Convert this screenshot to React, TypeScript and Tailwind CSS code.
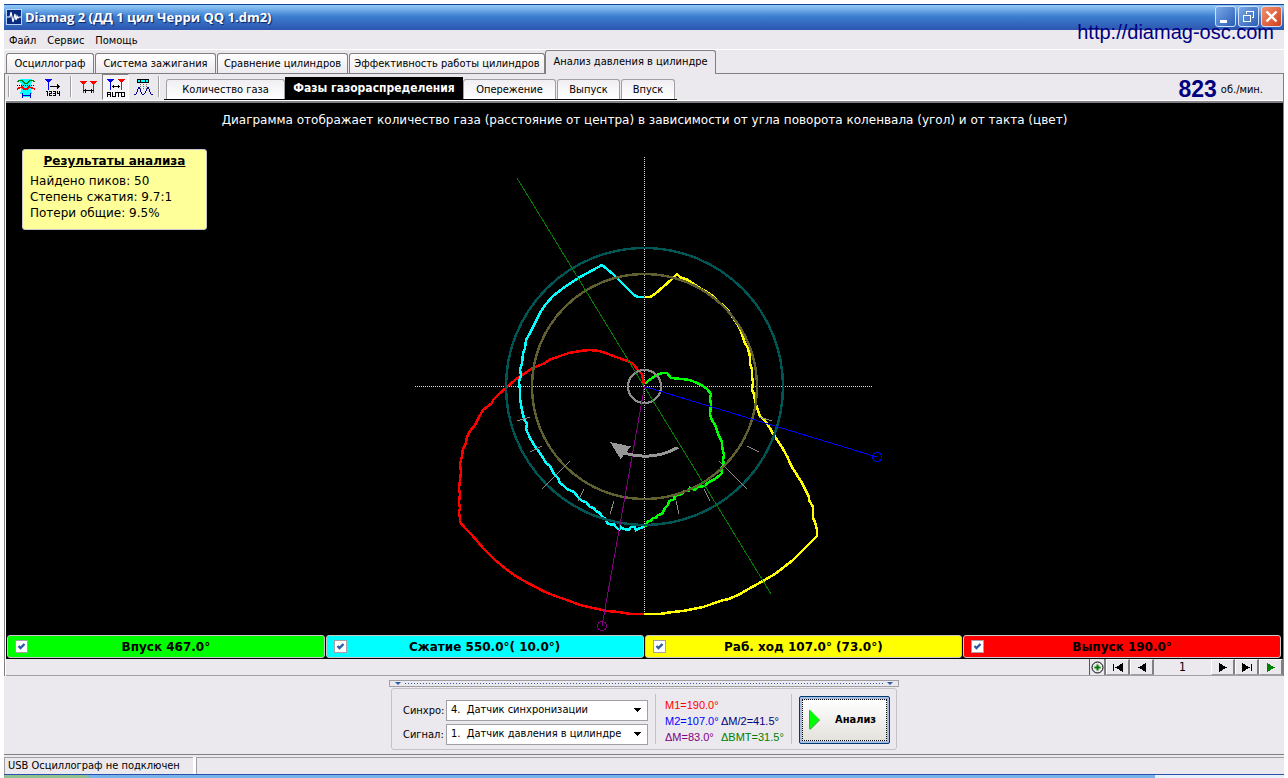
import React from "react";

const TAHOMA = "font-['DejaVu_Sans_Condensed','Liberation_Sans',sans-serif]";

const RED =
  "644,384 642,374 638,370 634,365 630,362 622,359 613,356 606,353 599,351 589,350 580,351 569,353 557,357 549,360 545,363 533,368 524,374 515,380 507,387 498,395 493,400 492,403 483,410 479,417 475,425 470,431 467,437 466,443 463,449 462,456 461,460 460,464 461,472 460,480 459,488 460,495 459,502 460,508 459,512 460,519 460,522 466,529 472,535 483,548 495,560 506,569 517,577 530,584 543,591 555,596 567,600 580,605 593,608 607,611 619,612 630,614 644,614";
const YELLOW =
  "644,614 660,614 672,612 683,611 693,609 703,607 712,604 720,601 729,599 740,594 752,587 763,581 775,574 784,567 793,560 805,548 817,536 817,530 815,522 813,518 813,507 809,500 809,497 805,489 802,483 797,475 792,467 789,461 788,458 783,449 778,441 773,434 770,428 766,422 760,416 757,408 755,401 754,394 752,390 753,383 752,376 752,369 750,364 750,357 748,348 745,343 743,338 741,331 738,325 734,319 730,313 726,308 720,303 714,297 707,292 701,289 695,285 688,280 680,277 677,274 672,279 663,287 655,294 650,297 645,297";
const CYAN =
  "644,297 638,297 634,295 630,291 622,283 613,274 602,265 593,270 580,277 566,286 553,296 546,304 540,313 536,321 532,329 530,333 526,340 525,348 523,354 522,363 520,370 521,375 519,382 520,390 520,398 522,410 524,419 527,424 526,429 530,438 533,443 537,449 542,456 546,463 550,466 554,474 558,478 560,483 564,486 567,489 574,492 578,497 582,501 586,502 590,507 594,508 596,511 600,513 602,517 606,519 607,523 612,525 614,524 616,527 619,530 621,527 624,529 629,530 631,527 634,526 636,530 640,528 644,527";
const GREEN =
  "645,527 648,521 651,521 653,518 656,518 658,515 662,514 665,508 668,505 669,501 675,499 674,496 682,494 684,491 689,491 690,488 695,490 698,487 704,486 709,482 715,479 720,475 722,473 721,468 724,465 723,460 724,455 722,446 722,442 720,438 718,434 717,430 715,425 712,420 710,414 711,405 710,398 711,394 707,389 703,386 697,383 690,380 682,379 671,378 667,373 662,373 657,375 652,378 648,381 645,384";

const TICKS = [
  [517, 421, 530, 417],
  [530, 452, 542, 446],
  [542, 489, 570, 461],
  [578, 501, 584, 489],
  [610, 514, 614, 501],
  [759, 417, 772, 421],
  [747, 446, 759, 452],
  [719, 461, 747, 489],
  [704, 489, 710, 501],
  [676, 501, 679, 514],
];

function PolarChart() {
  return (
    <svg
      width="479"
      height="484"
      viewBox="405 150 479 484"
      fill="none"
      shapeRendering="crispEdges"
      role="img"
      aria-label="Фазы газораспределения"
      className="mx-auto block"
    >
      <path d="M644.5 157V615M415 386.5H873" stroke="#d8d8d8" strokeDasharray="1 1" />
      <polyline points={RED} stroke="#ff0000" strokeWidth="2.5" />
      <polyline points={YELLOW} stroke="#ffff00" strokeWidth="2.5" />
      <polyline points={CYAN} stroke="#00ffff" strokeWidth="2.5" />
      <polyline points={GREEN} stroke="#00ff00" strokeWidth="2.5" />
      <circle cx="644.5" cy="386.5" r="138.5" stroke="#005555" strokeWidth="2.400" />
      <circle cx="644.5" cy="386.5" r="112.5" stroke="#606030" strokeWidth="2.400" />
      <circle cx="644.5" cy="386.5" r="16.5" stroke="#8c8c8c" strokeWidth="2.200" />
      {TICKS.map(([x1, y1, x2, y2]) => (
        <line key={`${x1}-${y1}`} x1={x1} y1={y1} x2={x2} y2={y2} stroke="#8a8a8a" />
      ))}
      <path d="M517 178L771 594" stroke="#008000" />
      <path d="M644.5 386.5L877 457" stroke="#0000ff" />
      <circle cx="877" cy="457" r="4.5" stroke="#0000ff" />
      <path d="M644.5 386.5L602 626" stroke="#800080" />
      <circle cx="602" cy="626" r="4.5" stroke="#800080" />
      <path d="M678 447.5A70 70 0 0 1 624 453" stroke="#989898" strokeWidth="3" />
      <path d="M610 442L631 446.5L620.5 459Z" fill="#989898" />
    </svg>
  );
}

function TabBar() {
  const tabs = [
    { label: "Осциллограф", w: "w-[88px]" },
    { label: "Система зажигания", w: "w-[121px]" },
    { label: "Сравнение цилиндров", w: "w-[131px]" },
    { label: "Эффективность работы цилиндров", w: "w-[196px]" },
  ];
  return (
    <div role="tablist" className="flex h-[24px] items-end border-b border-[#808080] pl-[2px]">
      {tabs.map((t) => (
        <button
          key={t.label}
          role="tab"
          aria-selected="false"
          className={`${t.w} mr-px h-[20px] shrink-0 whitespace-nowrap rounded-t-[3px] border border-b-0 border-[#808080] bg-linear-to-b from-white to-[#eceaee] pt-px`}
        >
          {t.label}
        </button>
      ))}
      <button
        role="tab"
        aria-selected="true"
        className="-mb-px -ml-px h-[24px] w-[171px] shrink-0 whitespace-nowrap rounded-t-[3px] border border-b-0 border-[#808080] bg-[#ebe9ed]"
      >
        Анализ давления в цилиндре
      </button>
    </div>
  );
}

function Separator() {
  return <span className="mt-[2px] h-[21px] w-[2px] border-l border-[#a0a0a0] bg-white" />;
}

function Toolbar() {
  const plain =
    "h-[20px] rounded-t-[3px] border border-b-0 border-[#a0a0a4] bg-linear-to-b from-[#f0eef2] to-white pt-px whitespace-nowrap";
  const tool = "grid h-[26px] place-items-center pt-px";
  return (
    <div className="flex h-[26px] items-start pl-[3px]">
      <Separator />
      <button aria-label="Осциллограмма" className={`${tool} ml-[3px] w-[26px]`}>
        <svg width="20" height="20" viewBox="0 0 20 20" fill="none" shapeRendering="crispEdges">
          <path d="M4 1h12v4h-1v9h1v2h-2v3H6v-3H4v-2h1V5H4z" fill="#00ffff" />
          <path d="M1 3.500h1l1-1h3l2 2 1 1h2l1-1 2-2h3l1 1h1" stroke="#008000" />
          <path d="M1 7.500H19" stroke="#000" strokeDasharray="1 1" />
          <path d="M1 11l2-1 3-1 2 2h3l2-2 3 1 3 1" stroke="#ff0000" strokeWidth="1.500" />
          <path d="M6 17.500h9M6.500 15v5M14.500 15v5" stroke="#0000c0" />
        </svg>
      </button>
      <button aria-label="Номера" className={`${tool} w-[28px]`}>
        <svg width="18" height="20" viewBox="0 0 18 20" fill="none" shapeRendering="crispEdges">
          <path d="M1 1h7v1H7v1H6v1H3V3H2V2H1z" fill="#0000ff" />
          <path d="M4.500 3v9" stroke="#0000ff" />
          <path d="M6 8.500h10M13 6v5M14 7v3M15 8h1" stroke="#000" />
          <path d="M2 13.500h1v4M5 13.500h2v2h-1.500v2H8M9 13.500h2v4H9M9 15.500h2M13.500 13v2.500H16M15.500 13v5" stroke="#000" />
        </svg>
      </button>
      <span className="ml-[3px] flex"><Separator /></span>
      <button aria-label="Маркеры" className={`${tool} ml-[2px] w-[28px]`}>
        <svg width="18" height="20" viewBox="0 0 18 20" fill="none" shapeRendering="crispEdges">
          <path d="M1 3h7v1H7v1H6v1H5v9H4V6H3V5H2V4H1z" fill="#ff0000" />
          <path d="M11 3h7v1h-1v1h-1v1h-1v9h-1V6h-1V5h-1V4h-1z" fill="#ff0000" />
          <path d="M4 12.500h11M6.500 10.500v4M12.500 10.500v4" stroke="#000" />
        </svg>
      </button>
      <button
        aria-label="Автоматические маркеры"
        aria-pressed="true"
        className="grid h-[26px] w-[27px] place-items-center border border-t-[#808080] border-l-[#808080] border-r-white border-b-white bg-[#f6f5f7]"
      >
        <svg width="20" height="21" viewBox="0 0 20 21" fill="none" shapeRendering="crispEdges">
          <path d="M1 2h7v1H7v1H6v1H5v8H4V5H3V4H2V3H1z" fill="#0000ff" />
          <path d="M12 2h7v1h-1v1h-1v1h-1v8h-1V5h-1V4h-1V3h-1z" fill="#ff0000" />
          <path d="M6 9.500h8M7.500 8v3M12.500 8v3" stroke="#000" />
          <path d="M1.500 20v-4l1-1h1l1 1v4M1 17.500h4M6.500 15v4.500h3V15M10 15.500h5M12.500 15v5M15.500 15.500h3v4h-3z" stroke="#000" />
        </svg>
      </button>
      <button aria-label="Сравнение" className={`${tool} w-[28px]`}>
        <svg width="19" height="19" viewBox="0 0 19 19" fill="none" shapeRendering="crispEdges">
          <path d="M3 1h12v4H3z" fill="#000" />
          <path d="M4 2h2v2H4zM7 2h4v2H7zM12 2h2v2h-2z" fill="#00ffff" />
          <path d="M6.500 6v6M9.500 6v6M12.500 6v6" stroke="#707070" strokeDasharray="1 1" />
          <path d="M0 17l2-1 3-7 3 7h2l1-1 3-6 3 7 2 1" stroke="#0000a0" />
        </svg>
      </button>
      <span className="ml-px flex"><Separator /></span>
      <div role="tablist" className="mt-[4px] ml-[4px] flex h-[22px] items-end border-b border-black pr-[2px] pl-[2px]">
        <button role="tab" aria-selected="false" className={`${plain} w-[119px]`}>Количество газа</button>
        <button role="tab" aria-selected="true" className="h-[22px] w-[178px] whitespace-nowrap bg-black text-[12px] font-bold text-white">
          Фазы газораспределения
        </button>
        <button role="tab" aria-selected="false" className={`${plain} w-[93px]`}>Опережение</button>
        <button role="tab" aria-selected="false" className={`${plain} ml-px w-[63px]`}>Выпуск</button>
        <button role="tab" aria-selected="false" className={`${plain} ml-px w-[54px]`}>Впуск</button>
      </div>
      <p className="ml-auto flex items-center gap-1 pr-[20px] leading-[28px]">
        <b className="font-['Liberation_Sans',sans-serif] text-[23px] text-[#000080]">823</b>
        <span className="pt-[2px]">об./мин.</span>
      </p>
    </div>
  );
}

function PhaseLabel({ text, bg }: { text: string; bg: string }) {
  return (
    <label
      className={`grid h-[23px] flex-1 grid-cols-[20px_1fr_20px] items-center rounded-[3px] border border-[#c8c8c8] px-[7px] ${bg}`}
    >
      <span className="grid">
        <input
          type="checkbox"
          defaultChecked
          className="peer col-start-1 row-start-1 size-[13px] appearance-none border border-[#a8a0a8] bg-white"
        />
        <svg
          width="13"
          height="13"
          viewBox="0 0 13 13"
          fill="none"
          className="pointer-events-none col-start-1 row-start-1 hidden peer-checked:block"
        >
          <path d="M3.500 6L5.500 8L9.500 4" stroke="#2a5caa" strokeWidth="2.400" />
        </svg>
      </span>
      <span className="text-center font-['DejaVu_Sans',sans-serif] text-[12px] font-bold">{text}</span>
    </label>
  );
}

function PagerButton({ label, d, color, w }: { label: string; d: string; color: string; w: string }) {
  return (
    <button
      aria-label={label}
      className={`${w} grid h-[16px] place-items-center border-t border-r-2 border-b border-l border-t-white border-r-[#808084] border-b-[#a0a0a0] border-l-white`}
    >
      <svg width="12" height="9" viewBox="0 0 12 9" className={color} fill="currentColor" shapeRendering="crispEdges">
        <path d={d} />
      </svg>
    </button>
  );
}

function Pager() {
  return (
    <div className="flex h-[17px] justify-end border-b border-[#a0a0a4]">
      <button
        aria-label="Добавить"
        className="grid h-[16px] w-[17px] place-items-center border-r-2 border-l border-r-[#808084] border-l-[#2a5caa]"
      >
        <svg width="13" height="13" viewBox="0 0 13 13" fill="none">
          <circle cx="6.500" cy="6.500" r="5.500" stroke="#000" />
          <path d="M6.500 3.500v6M3.500 6.500h6" stroke="#008000" strokeWidth="2" />
        </svg>
      </button>
      <PagerButton label="Первая" w="w-[24px]" color="text-black" d="M1 1h1v7H1zM11 0v9L3 4.500z" />
      <PagerButton label="Предыдущая" w="w-[24px]" color="text-black" d="M10 0v9L2 4.500z" />
      <output className="w-[57px] text-center text-[12px] leading-[16px]">1</output>
      <PagerButton label="Следующая" w="w-[24px]" color="text-black" d="M2 0v9L10 4.500z" />
      <PagerButton label="Последняя" w="w-[24px]" color="text-black" d="M1 0v9L9 4.500zM10 1h1v7h-1z" />
      <PagerButton label="Пуск" w="w-[24px]" color="text-[#008000]" d="M2 0v9L10 4.500z" />
    </div>
  );
}

function Combo({ id, label, value }: { id: string; label: string; value: string }) {
  return (
    <div className="flex items-center">
      <label htmlFor={id} className="w-[43px] pt-[2px]">{label}</label>
      <span className="grid w-[202px] items-center">
        <select
          id={id}
          className="col-start-1 row-start-1 h-[21px] w-full appearance-none border border-[#a0a0a4] bg-white pl-[4px]"
        >
          <option>{value}</option>
        </select>
        <svg
          width="7"
          height="4"
          viewBox="0 0 7 4"
          shapeRendering="crispEdges"
          className="pointer-events-none col-start-1 row-start-1 mr-[7px] justify-self-end"
        >
          <path d="M0 0h7L3.500 4z" />
        </svg>
      </span>
    </div>
  );
}

function ControlPanel() {
  return (
    <div className="flex h-[79px] flex-col items-center border-b border-[#808080] pt-[4px]">
      <div className="flex h-[7px] w-[510px] items-center gap-[4px] border border-[#a0a0a4] px-[5px]">
        <svg width="6" height="3" viewBox="0 0 6 3"><path d="M0 0h6L3 3z" fill="#2a5caa" /></svg>
        <span className="h-px flex-1 bg-[repeating-linear-gradient(90deg,#2a5caa_0_1px,transparent_1px_3px)]" />
        <svg width="6" height="3" viewBox="0 0 6 3"><path d="M0 0h6L3 3z" fill="#2a5caa" /></svg>
      </div>
      <div className="mt-px flex h-[62px] w-[506px] items-center rounded-[3px] border border-[#c4c2c8] pr-[6px] pl-[11px]">
        <div className="flex flex-col gap-[3px] pt-[6px]">
          <Combo id="sync" label="Синхро:" value={"4.\u00a0 Датчик синхронизации"} />
          <Combo id="signal" label="Сигнал:" value={"1.\u00a0 Датчик давления в цилиндре"} />
        </div>
        <div className="ml-[7px] h-[50px] w-px bg-[#c4c2c8]" />
        <div className="ml-[9px] grid w-[126px] grid-cols-[56px_1fr] pt-[4px] font-['Liberation_Sans',sans-serif] text-[11px] leading-[16px] whitespace-nowrap">
          <span className="col-span-2 text-[#ff0000]">M1=190.0°</span>
          <span className="text-[#0000ff]">M2=107.0°</span>
          <span className="text-[#000080]">ΔM/2=41.5°</span>
          <span className="text-[#800080]">ΔM=83.0°</span>
          <span className="text-[#008000]">ΔВМТ=31.5°</span>
        </div>
        <div className="h-[50px] w-px bg-[#c4c2c8]" />
        <button className="mt-px ml-auto h-[48px] w-[91px] rounded-[2px] border border-[#003c74] bg-[#a8bce0] p-[2px] font-bold">
          <span className="flex h-full items-center border border-dotted border-black bg-linear-to-b from-white to-[#e4e2dc] pl-[6px]">
            <svg width="11" height="20" viewBox="0 0 11 20">
              <path d="M1 0L11 10L1 20z" fill="#00ff00" />
              <path d="M0.500 0v19M1 19.500L10.500 10" stroke="#808080" />
            </svg>
            <span className="pt-[2px] pl-[15px]">Анализ</span>
          </span>
        </button>
      </div>
    </div>
  );
}

function TitleBar() {
  const btn = "grid size-[21px] place-items-center rounded-[3px] border border-[#cfe0f8]";
  return (
    <header className="flex h-[26px] items-center border-t border-[#14449c] bg-linear-to-b from-[#8cc4f4] from-5% via-[#3d7fd0] via-45% to-[#2c55b0] pr-[2px] pl-[2px]">
      <svg width="16" height="16" viewBox="0 0 16 16" fill="none" className="-mt-[2px]">
        <rect x="0.500" y="0.500" width="15" height="15" fill="#0a2a80" stroke="#b8d4f8" />
        <path d="M1 8h3l1-5 2 10 2-8 1 6 1-4 1 2 1-1h2" stroke="#fff" strokeWidth="1.200" />
      </svg>
      <h1 className="pl-[3px] font-['Open_Sans',sans-serif] text-[13px] font-bold text-white [text-shadow:1px_1px_1px_#0a2060]">
        Diamag 2 (ДД 1 цил Черри QQ 1.dm2)
      </h1>
      <div className="ml-auto flex gap-[2px] pb-[2px]">
        <button aria-label="Свернуть" className={`${btn} bg-linear-to-br from-[#7aaae8] to-[#2a5cb4]`}>
          <svg width="17" height="17" viewBox="0 0 17 17"><path d="M3 12h7v3H3z" fill="#fff" /></svg>
        </button>
        <button aria-label="Восстановить" className={`${btn} bg-linear-to-br from-[#7aaae8] to-[#2a5cb4]`}>
          <svg width="17" height="17" viewBox="0 0 17 17" fill="none" stroke="#fff" shapeRendering="crispEdges">
            <path d="M3.500 7.500h7v6h-7zM3 7h8M6.500 6V3.500h7v6H12M6 3h8" />
          </svg>
        </button>
        <button aria-label="Закрыть" className={`${btn} bg-linear-to-br from-[#f09070] to-[#d03c10]`}>
          <svg width="17" height="17" viewBox="0 0 17 17"><path d="M3.500 3.500l10 10M13.500 3.500l-10 10" stroke="#fff" strokeWidth="2.400" /></svg>
        </button>
      </div>
    </header>
  );
}

export default function App() {
  return (
    <div className={`relative flex min-h-screen flex-col bg-white px-[4px] pt-[4px] text-[11px] text-black ${TAHOMA}`}>
      <TitleBar />
      <a
        href="http://diamag-osc.com"
        className="absolute top-[20px] right-[14px] font-['Liberation_Sans',sans-serif] text-[20px] leading-[24px] text-[#000080]"
      >
        http://diamag-osc.com
      </a>
      <div className="flex flex-1 flex-col bg-[#ebe9ed]">
        <nav className="flex h-[20px] items-center gap-[11px] border-b border-white pt-[3px] pl-[5px]">
          <button>Файл</button>
          <button>Сервис</button>
          <button>Помощь</button>
        </nav>
        <TabBar />
        <main className="flex flex-1 flex-col border-x border-[#808080]">
          <Toolbar />
          <div className="flex flex-1 flex-col border-t border-l border-white">
            <section className="relative flex-1 border-t-2 border-[#808084] bg-black font-['DejaVu_Sans',sans-serif]">
              <p className="h-[47px] pt-[8px] text-center text-[12px] leading-[18px] text-white">
                Диаграмма отображает количество газа (расстояние от центра) в зависимости от угла поворота коленвала (угол) и от такта (цвет)
              </p>
              <PolarChart />
              <aside className="absolute top-[46px] left-[16px] h-[81px] w-[185px] rounded-[3px] border border-[#c8c8c8] bg-[#ffff99] px-[7px] pt-[3px] text-[12px] leading-[16px]">
                <h2 className="mb-[4px] text-center font-bold underline">Результаты анализа</h2>
                <p>Найдено пиков: 50</p>
                <p>Степень сжатия: 9.7:1</p>
                <p>Потери общие: 9.5%</p>
              </aside>
            </section>
            <div className="flex h-[25px] gap-px bg-black pt-px pr-[2px] pl-px">
              <PhaseLabel bg="bg-[#00ff00]" text="Впуск 467.0°" />
              <PhaseLabel bg="bg-[#00ffff]" text="Сжатие 550.0°( 10.0°)" />
              <PhaseLabel bg="bg-[#ffff00]" text="Раб. ход 107.0° (73.0°)" />
              <PhaseLabel bg="bg-[#ff0000]" text="Выпуск 190.0°" />
            </div>
            <Pager />
          </div>
        </main>
        <ControlPanel />
        <footer className="mt-[2px] flex h-[17px] gap-[3px] bg-white leading-[16px]">
          <span className="w-[189px] border-t border-l border-[#a0a0a4] bg-[#ebe9ed] pl-[3px]">USB Осциллограф не подключен</span>
          <span className="flex-1 border-t border-l border-[#a0a0a4] bg-[#ebe9ed]" />
        </footer>
      </div>
      <div className="flex h-[4px] border-t border-[#2850b0] bg-[#78b4ea]">
        <span className="w-[85px] rounded-tr-[3px] bg-[#90c090]" />
        <span className="ml-auto w-[129px] bg-[#e8f2fa]" />
      </div>
    </div>
  );
}
